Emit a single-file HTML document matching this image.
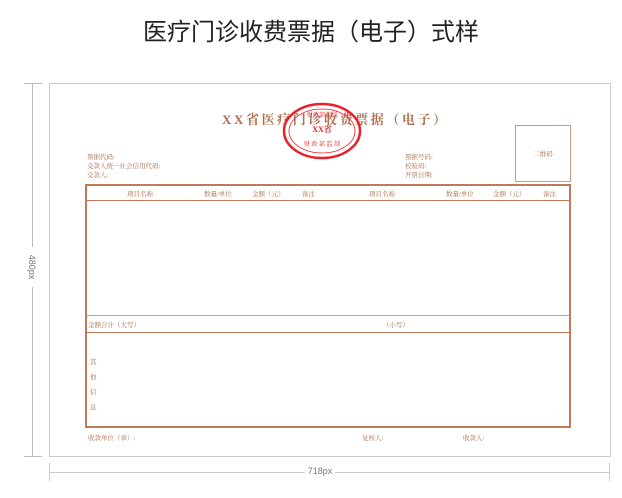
<!DOCTYPE html>
<html><head><meta charset="utf-8"><style>
body{margin:0;width:622px;height:498px;background:#fff;position:relative;overflow:hidden;font-family:"Liberation Serif","Noto Serif CJK SC",serif;}
.a{position:absolute;white-space:nowrap}
.s{font-size:6.5px;color:#a86a4a}
</style></head><body>
<div class="a" style="left:0;width:622px;top:12px;text-align:center;font-family:'Liberation Sans','Noto Sans CJK SC',sans-serif;font-size:24px;color:#222;">医疗门诊收费票据（电子）式样</div>
<div class="a" style="left:49px;top:83px;width:560px;height:372px;border:1px solid #ccc;"></div>
<div class="a" style="left:32px;top:83px;width:1px;height:373px;background:#bbb"></div>
<div class="a" style="left:24px;top:83px;width:18px;height:1px;background:#bbb"></div>
<div class="a" style="left:24px;top:456px;width:18px;height:1px;background:#bbb"></div>
<div class="a" style="left:12px;top:262px;width:40px;text-align:center;transform:rotate(90deg);font-family:'Liberation Sans',sans-serif;font-size:9px;color:#777;background:#fff">480px</div>
<div class="a" style="left:49px;top:472px;width:561px;height:1px;background:#ccc"></div>
<div class="a" style="left:49px;top:463px;width:1px;height:18px;background:#ccc"></div>
<div class="a" style="left:609px;top:463px;width:1px;height:18px;background:#ccc"></div>
<div class="a" style="left:305px;top:466px;width:30px;text-align:center;background:#fff;font-family:'Liberation Sans',sans-serif;font-size:9px;color:#777">718px</div>
<div class="a" style="left:222px;top:109px;font-size:13px;font-weight:bold;color:#b07050;letter-spacing:2.6px">XX省医疗门诊收费票据（电子）</div>
<svg class="a" style="left:280px;top:100px" width="84" height="64"><ellipse cx="42" cy="31" rx="38" ry="27" fill="none" stroke="#e8202a" stroke-width="2.5"/><ellipse cx="42" cy="31" rx="33" ry="22" fill="none" stroke="#e8202a" stroke-width="0.8"/>
<text x="42" y="17" font-size="6" fill="#e8202a" text-anchor="middle">财政部监制</text>
<text x="42" y="32" font-size="8" fill="#e8202a" text-anchor="middle" font-weight="bold">XX省</text>
<text x="42" y="46" font-size="6" fill="#e8202a" text-anchor="middle">财 政 部 监 制</text></svg>
<div class="a" style="left:515px;top:125px;width:54px;height:55px;border:1px solid #c89a80;"></div>
<div class="a s" style="left:515px;top:149px;width:56px;text-align:center">二维码</div>
<div class="a s" style="left:87px;top:153px;line-height:9px">票据代码:<br>交款人统一社会信用代码:<br>交款人:</div>
<div class="a s" style="left:405px;top:153px;line-height:9px">票据号码:<br>校验码:<br>开票日期:</div>
<div class="a" style="left:85px;top:184px;width:482px;height:240px;border:2px solid #c07a5a;"></div>
<div class="a" style="left:86px;top:200px;width:483px;height:1px;background:#c07a5a"></div>
<div class="a" style="left:86px;top:315px;width:483px;height:1px;background:#d09a80"></div>
<div class="a" style="left:86px;top:332px;width:483px;height:1px;background:#c07a5a"></div>
<div class="a s" style="left:127px;top:189px">项目名称</div>
<div class="a s" style="left:204px;top:189px">数量/单位</div>
<div class="a s" style="left:252px;top:189px">金额（元）</div>
<div class="a s" style="left:302px;top:189px">备注</div>
<div class="a s" style="left:369px;top:189px">项目名称</div>
<div class="a s" style="left:446px;top:189px">数量/单位</div>
<div class="a s" style="left:493px;top:189px">金额（元）</div>
<div class="a s" style="left:543px;top:189px">备注</div>
<div class="a s" style="left:88px;top:320px">金额合计（大写）</div>
<div class="a s" style="left:383px;top:320px">（小写）</div>
<div class="a s" style="left:90px;top:355px;line-height:15px">其<br>他<br>信<br>息</div>
<div class="a s" style="left:88px;top:433px">收款单位（章）:</div>
<div class="a s" style="left:362px;top:433px">复核人:</div>
<div class="a s" style="left:463px;top:433px">收款人:</div>
</body></html>
